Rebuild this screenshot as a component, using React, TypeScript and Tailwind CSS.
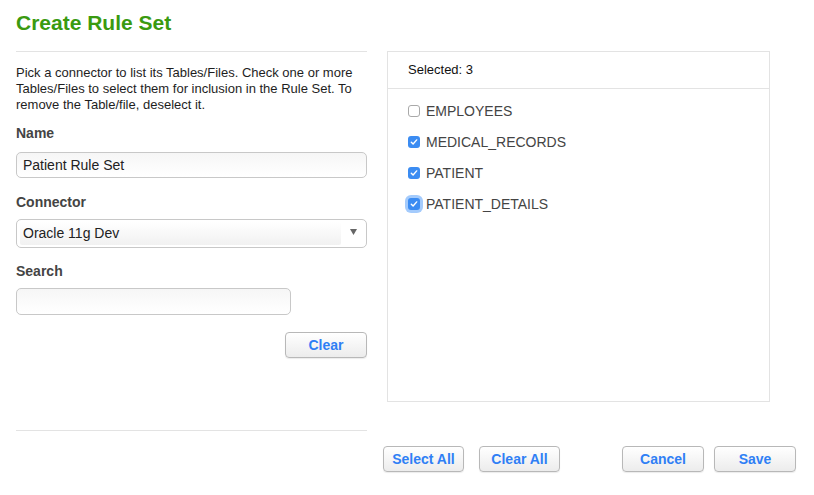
import React from 'react';

const items = [
  { name: 'EMPLOYEES', checked: false },
  { name: 'MEDICAL_RECORDS', checked: true },
  { name: 'PATIENT', checked: true },
  { name: 'PATIENT_DETAILS', checked: true, focus: true },
];

const Check: React.FC<{ checked: boolean; focus?: boolean }> = ({ checked, focus }) => {
  if (!checked) {
    return <span className="w-[12px] h-[12px] rounded-[3px] border border-[#a9a9a9] bg-white shrink-0" />;
  }
  return (
    <span
      className={`w-[12px] h-[12px] rounded-[3px] bg-[#3b8cf2] shrink-0 flex items-center justify-center ${
        focus ? 'shadow-[0_0_0_3px_rgba(90,160,250,0.55)]' : ''
      }`}
    >
      <svg width="8" height="8" viewBox="0 0 8 8">
        <path d="M1.3 4.2 L3.1 6 L6.7 1.9" fill="none" stroke="#fff" strokeWidth="1.4" strokeLinecap="round" strokeLinejoin="round" />
      </svg>
    </span>
  );
};

const Btn: React.FC<{ label: string; className?: string }> = ({ label, className = '' }) => (
  <button
    className={`h-[26px] rounded-[4px] border border-[#b8b8b8] bg-gradient-to-b from-white to-[#ececec] text-[14px] font-bold text-[#2f7ff5] shadow-[0_1px_1px_rgba(0,0,0,0.08)] ${className}`}
  >
    {label}
  </button>
);

export default function App() {
  return (
    <div className="w-[814px] h-[495px] bg-white px-4 pt-[11px] font-['Liberation_Sans',Arial,sans-serif] text-[#222]">
      <h1 className="text-[21px] leading-[24px] font-bold text-[#3a9a10]">Create Rule Set</h1>

      <div className="flex gap-5 mt-4">
        <div className="w-[351px] border-t border-[#e3e3e3] pt-[13px]">
          <p className="text-[13px] leading-[16px] text-[#1e1e1e]">
            Pick a connector to list its Tables/Files. Check one or more Tables/Files to select them for inclusion in the Rule Set. To
            remove the Table/file, deselect it.
          </p>

          <label className="block mt-3 text-[14px] leading-[16px] font-bold text-[#444]">Name</label>
          <div className="mt-[11px] h-[26px] rounded-[5px] border border-[#c8c8c8] bg-gradient-to-b from-[#f6f6f6] to-white px-[6px] flex items-center text-[14px] text-[#222]">
            Patient Rule Set
          </div>

          <label className="block mt-4 text-[14px] leading-[16px] font-bold text-[#444]">Connector</label>
          <div className="mt-[9px] h-[29px] rounded-[5px] border border-[#c8c8c8] bg-white pl-[3px] pr-[9px] flex items-center">
            <div className="flex-1 h-[23px] rounded-[2px] bg-gradient-to-b from-white to-[#f1f1f1] px-[3px] flex items-center text-[14px] text-[#222]">
              Oracle 11g Dev
            </div>
            <svg width="7" height="6" viewBox="0 0 7 6" className="ml-[9px] mb-[3px]">
              <path d="M0 0 H7 L3.5 6 Z" fill="#666" />
            </svg>
          </div>

          <label className="block mt-[15px] text-[14px] leading-[16px] font-bold text-[#444]">Search</label>
          <div className="mt-[9px] w-[275px] h-[27px] rounded-[5px] border border-[#c8c8c8] bg-gradient-to-b from-[#f6f6f6] to-white" />

          <div className="flex justify-end mt-[17px]">
            <Btn label="Clear" className="w-[82px]" />
          </div>
        </div>

        <div className="w-[383px] h-[351px] border border-[#e3e3e3]">
          <div className="h-[37px] border-b border-[#e3e3e3] pl-5 flex items-center text-[13px] text-[#111]">
            Selected: 3
          </div>
          <div className="pl-5 pt-[14px] flex flex-col gap-[15px]">
            {items.map((it) => (
              <div key={it.name} className="flex items-center gap-[6px] h-[16px] text-[14px] text-[#444]">
                <Check checked={it.checked} focus={it.focus} />
                <span>{it.name}</span>
              </div>
            ))}
          </div>
        </div>
      </div>

      <div className="flex items-start mt-[28px]">
        <div className="w-[351px] h-px bg-[#e3e3e3]" />
        <div className="flex mt-4 ml-4">
          <Btn label="Select All" className="w-[81px]" />
          <Btn label="Clear All" className="w-[81px] ml-[15px]" />
          <Btn label="Cancel" className="w-[82px] ml-[62px]" />
          <Btn label="Save" className="w-[82px] ml-[10px]" />
        </div>
      </div>
    </div>
  );
}
